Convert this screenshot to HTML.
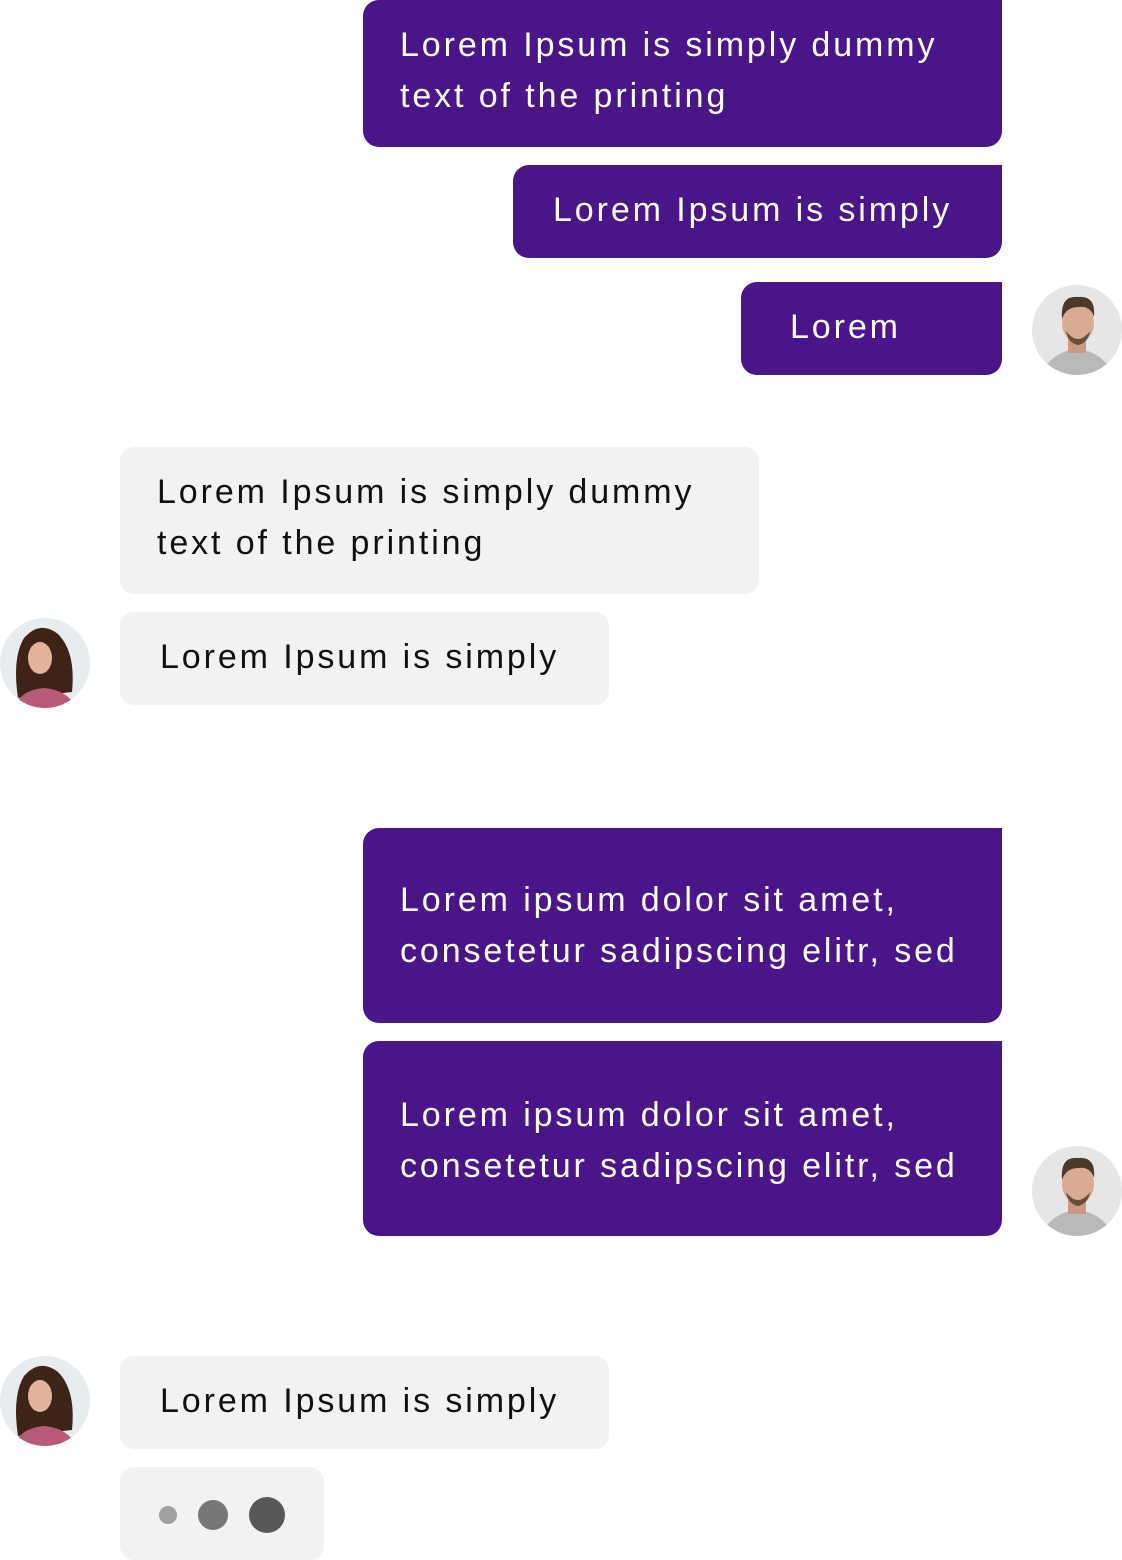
<!DOCTYPE html>
<html><head><style>
body{margin:0;width:1122px;height:1560px;background:#fff;position:relative;overflow:hidden;font-family:"Liberation Sans",sans-serif}
.b{position:absolute;box-sizing:border-box;font-size:34px;letter-spacing:2.9px;line-height:51px;white-space:nowrap}
.p{background:#4b158a;color:#fff;border-radius:16px 0 16px 16px}
.g{background:#f2f2f2;color:#111;border-radius:14px}
.t{position:absolute}
.av{position:absolute;width:90px;height:90px;border-radius:50%;overflow:hidden}
.dot{position:absolute;border-radius:50%}
</style></head><body>
<div class="b p" style="left:363px;top:0;width:639px;height:147px"><span class="t" style="left:37px;top:20px">Lorem Ipsum is simply dummy<br>text of the printing</span></div>
<div class="b p" style="left:513px;top:165px;width:489px;height:93px"><span class="t" style="left:40px;top:20px">Lorem Ipsum is simply</span></div>
<div class="b p" style="left:741px;top:282px;width:261px;height:93px"><span class="t" style="left:49px;top:20px">Lorem</span></div>

<div class="b g" style="left:120px;top:447px;width:639px;height:147px"><span class="t" style="left:37px;top:20px">Lorem Ipsum is simply dummy<br>text of the printing</span></div>
<div class="b g" style="left:120px;top:612px;width:489px;height:93px"><span class="t" style="left:40px;top:20px">Lorem Ipsum is simply</span></div>

<div class="b p" style="left:363px;top:828px;width:639px;height:195px"><span class="t" style="left:37px;top:47px">Lorem ipsum dolor sit amet,<br>consetetur sadipscing elitr, sed</span></div>
<div class="b p" style="left:363px;top:1041px;width:639px;height:195px"><span class="t" style="left:37px;top:49px">Lorem ipsum dolor sit amet,<br>consetetur sadipscing elitr, sed</span></div>

<div class="b g" style="left:120px;top:1356px;width:489px;height:93px"><span class="t" style="left:40px;top:20px">Lorem Ipsum is simply</span></div>
<div class="b g" style="left:120px;top:1467px;width:204px;height:93px"></div>
<div class="dot" style="left:159px;top:1506px;width:18px;height:18px;background:#a0a0a0"></div>
<div class="dot" style="left:198px;top:1500px;width:30px;height:30px;background:#777"></div>
<div class="dot" style="left:249px;top:1497px;width:36px;height:36px;background:#585858"></div>

<svg class="av" style="left:1032px;top:285px" viewBox="0 0 90 90"><rect width="90" height="90" fill="#e6e6e6"/><path d="M8 90 Q20 66 45 64 Q70 66 82 90Z" fill="#b9b9b9"/><rect x="36" y="52" width="18" height="16" fill="#c99a82"/><ellipse cx="46" cy="38" rx="16" ry="20" fill="#d9ab92"/><path d="M30 34 Q28 10 46 12 Q64 10 62 32 Q58 20 46 22 Q34 22 30 34Z" fill="#4a3a2c"/><path d="M34 46 Q46 62 58 46 Q56 58 46 60 Q36 58 34 46Z" fill="#6b4e3a"/></svg>
<svg class="av" style="left:1032px;top:1146px" viewBox="0 0 90 90"><rect width="90" height="90" fill="#e6e6e6"/><path d="M8 90 Q20 66 45 64 Q70 66 82 90Z" fill="#b9b9b9"/><rect x="36" y="52" width="18" height="16" fill="#c99a82"/><ellipse cx="46" cy="38" rx="16" ry="20" fill="#d9ab92"/><path d="M30 34 Q28 10 46 12 Q64 10 62 32 Q58 20 46 22 Q34 22 30 34Z" fill="#4a3a2c"/><path d="M34 46 Q46 62 58 46 Q56 58 46 60 Q36 58 34 46Z" fill="#6b4e3a"/></svg>
<svg class="av" style="left:0;top:618px" viewBox="0 0 90 90"><rect width="90" height="90" fill="#e8ecef"/><path d="M18 80 Q12 40 24 20 Q40 2 58 16 Q76 34 72 74Z" fill="#3e2418"/><path d="M14 90 Q20 72 44 70 Q68 72 76 90Z" fill="#b85a7a"/><ellipse cx="40" cy="40" rx="12" ry="16" fill="#e2b39c"/></svg>
<svg class="av" style="left:0;top:1356px" viewBox="0 0 90 90"><rect width="90" height="90" fill="#e8ecef"/><path d="M18 80 Q12 40 24 20 Q40 2 58 16 Q76 34 72 74Z" fill="#3e2418"/><path d="M14 90 Q20 72 44 70 Q68 72 76 90Z" fill="#b85a7a"/><ellipse cx="40" cy="40" rx="12" ry="16" fill="#e2b39c"/></svg>
</body></html>
